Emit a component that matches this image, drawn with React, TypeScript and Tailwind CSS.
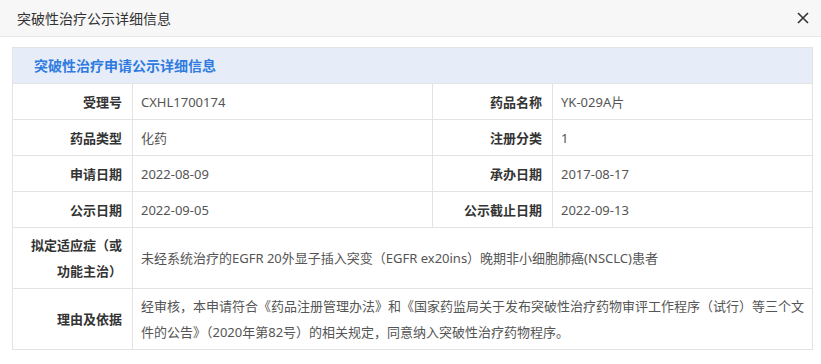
import React from "react";

const font = { fontFamily: '"Noto Sans", "Noto Sans CJK SC", sans-serif' };

function Label({ children, tall }: { children: React.ReactNode; tall?: boolean }) {
  return (
    <div
      className={`flex items-center justify-end text-right border-r border-b border-[#e3e3e3] pl-[10px] pr-[10px] font-bold text-[#333] text-[13px] leading-[26px] ${
        tall ? "h-[61px] py-[4px]" : "h-[36px]"
      }`}
    >
      <span>{children}</span>
    </div>
  );
}

function Value({ children, tall, span3 }: { children: React.ReactNode; tall?: boolean; span3?: boolean }) {
  return (
    <div
      className={`flex items-center border-r border-b border-[#e3e3e3] pl-[8px] pr-[4px] text-[#555] text-[13px] leading-[26px] ${
        tall ? "h-[61px] py-[4px]" : "h-[36px]"
      } ${span3 ? "col-span-3" : ""}`}
    >
      <span>{children}</span>
    </div>
  );
}

export default function App() {
  return (
    <div className="w-[821px] h-[364px] bg-white overflow-hidden" style={font}>
      <div className="h-[37px] bg-[#f7f7f7] border-b border-[#e8e8e8] flex items-center justify-between pl-[17px] pr-[12px]">
        <span className="text-[14px] text-[#333]">突破性治疗公示详细信息</span>
        <svg width="12" height="12" viewBox="0 0 12 12">
          <path d="M1 1L11 11M11 1L1 11" stroke="#333" strokeWidth="1.6" />
        </svg>
      </div>
      <div className="pt-[10px] pl-[12px]">
        <div className="w-[801px] border-l border-t border-[#e3e3e3]">
          <div className="h-[36px] bg-[#e6edf8] border-r border-b border-[#e3e3e3] flex items-center pl-[21px]">
            <span className="text-[14px] font-bold text-[#2f7be0]">突破性治疗申请公示详细信息</span>
          </div>
          <div className="grid grid-cols-[120px_300px_120px_260px]">
            <Label>受理号</Label>
            <Value>CXHL1700174</Value>
            <Label>药品名称</Label>
            <Value>YK-029A片</Value>

            <Label>药品类型</Label>
            <Value>化药</Value>
            <Label>注册分类</Label>
            <Value>1</Value>

            <Label>申请日期</Label>
            <Value>2022-08-09</Value>
            <Label>承办日期</Label>
            <Value>2017-08-17</Value>

            <Label>公示日期</Label>
            <Value>2022-09-05</Value>
            <Label>公示截止日期</Label>
            <Value>2022-09-13</Value>

            <Label tall>拟定适应症（或功能主治）</Label>
            <Value tall span3>
              未经系统治疗的EGFR 20外显子插入突变（EGFR ex20ins）晚期非小细胞肺癌(NSCLC)患者
            </Value>

            <Label tall>理由及依据</Label>
            <Value tall span3>
              经审核，本申请符合《药品注册管理办法》和《国家药监局关于发布突破性治疗药物审评工作程序（试行）等三个文
              <br />
              件的公告》（2020年第82号）的相关规定，同意纳入突破性治疗药物程序。
            </Value>
          </div>
        </div>
      </div>
    </div>
  );
}
